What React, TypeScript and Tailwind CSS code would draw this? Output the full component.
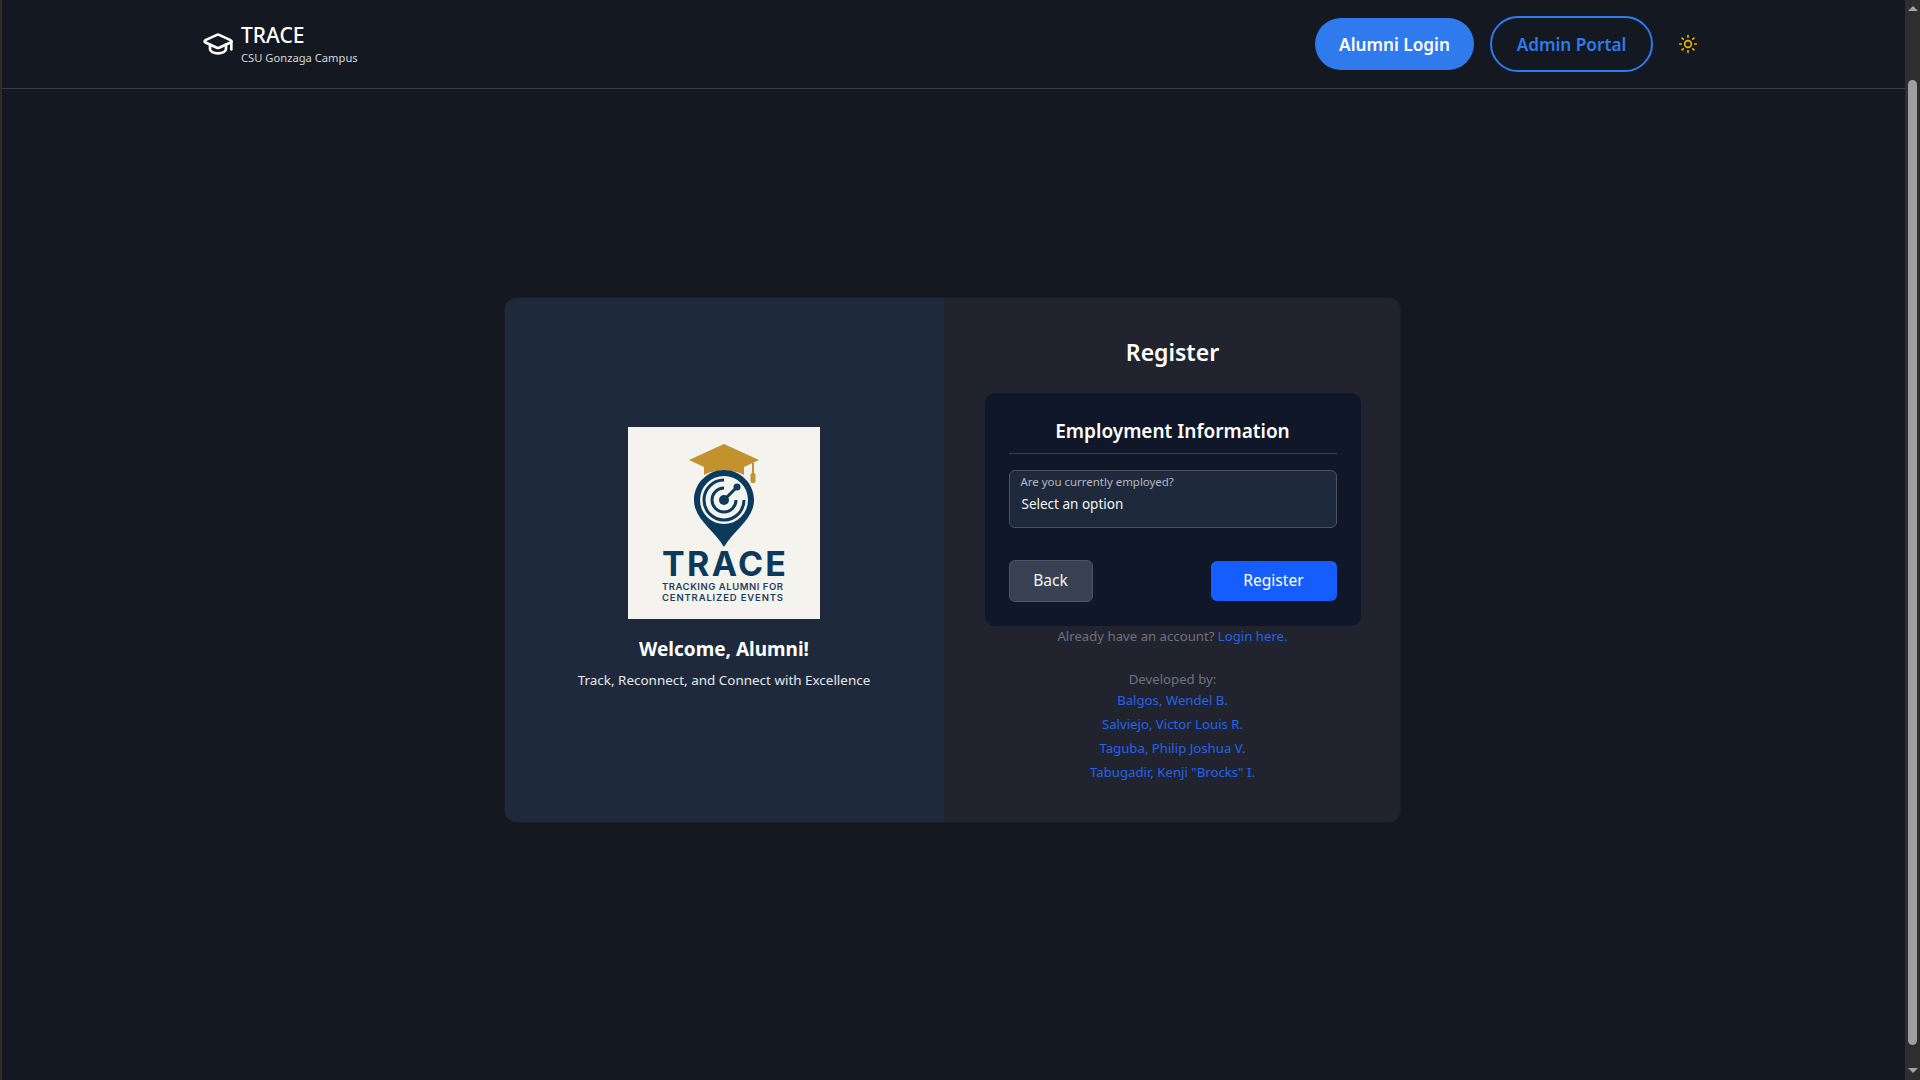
import React from "react";
import { Sun, GraduationCap } from "lucide-react";

function Logo() {
  return (
    <div className="w-[192px] h-[192px] bg-[#f5f3ee] shrink-0">
      <svg viewBox="0 0 192 192" width="192" height="192" className="block">
        <path d="M61 33 L96 17 L131 33 L116 40 L116 48 C106 42 86 42 76 48 L76 40 Z" fill="#c3922e" />
        <path d="M125 36 L125 48" stroke="#c3922e" strokeWidth="2" fill="none" />
        <rect x="122.500" y="46" width="5" height="10" rx="2" fill="#c3922e" />
        <path d="M96 120 C86 103 66 92 66 73 C66 56 80 43 96 43 C112 43 126 56 126 73 C126 92 106 103 96 120 Z" fill="#0b3a5c" />
        <circle cx="96" cy="73" r="24" fill="#f5f3ee" />
        <path d="M116 73 A20 20 0 1 1 96 53" fill="none" stroke="#0b3a5c" strokeWidth="3" />
        <path d="M108 73 A12 12 0 1 1 96 61" fill="none" stroke="#0b3a5c" strokeWidth="3" />
        <circle cx="96" cy="73" r="5" fill="#0b3a5c" />
        <path d="M96 73 L109 60" stroke="#0b3a5c" strokeWidth="3" />
        <circle cx="109" cy="60" r="3.500" fill="#0b3a5c" />
        <text x="34" y="149" textLength="124" lengthAdjust="spacing" fontFamily="Inter, sans-serif" fontWeight="700" fontSize="34" fill="#0b3a5c">TRACE</text>
        <text x="34" y="163" textLength="121" lengthAdjust="spacing" fontFamily="Inter, sans-serif" fontWeight="600" fontSize="9.500" fill="#1d4060">TRACKING ALUMNI FOR</text>
        <text x="34" y="174" textLength="121" lengthAdjust="spacing" fontFamily="Inter, sans-serif" fontWeight="600" fontSize="9.500" fill="#1d4060">CENTRALIZED EVENTS</text>
      </svg>
    </div>
  );
}

function Authors() {
  const names = ["Balgos, Wendel B.", "Salviejo, Victor Louis R.", "Taguba, Philip Joshua V.", 'Tabugadir, Kenji "Brocks" I.'];
  return (
    <div className="flex flex-col items-center">
      {names.map((n) => (
        <a key={n} className="text-[13.2px] leading-[24px] text-[#2563eb]">{n}</a>
      ))}
    </div>
  );
}

export default function App() {
  return (
    <div className="flex h-screen w-full overflow-hidden bg-[#141921] text-white font-['Noto_Sans',sans-serif]">
      <div className="w-[2px] shrink-0 bg-[#2b2b2b]" />
      <div className="flex-1 min-w-0 flex flex-col">
        <header className="h-[89px] shrink-0 border-b border-[#3a3e45] flex items-center justify-between pl-[200px] pr-[198px]">
          <div className="flex items-center gap-[7px]">
            <GraduationCap size={32} strokeWidth={2} className="text-white" />
            <div className="flex flex-col pt-[1px]">
              <span className="text-[21px] leading-[24px] font-medium">TRACE</span>
              <span className="text-[11.200px] leading-[16px] text-[#d4d6da] mt-[3px]">CSU Gonzaga Campus</span>
            </div>
          </div>
          <div className="flex items-center gap-[16px]">
            <button className="h-[52px] w-[159px] pt-[1px] rounded-full bg-[#2f7aed] text-[17.200px] font-semibold text-white">Alumni Login</button>
            <button className="h-[56px] w-[163px] pt-[1px] rounded-full border-2 border-[#2f7aed] text-[17.200px] font-semibold text-[#2f7aed]">Admin Portal</button>
            <div className="w-[38px] h-[40px] flex items-center justify-center pr-[1px]">
              <Sun size={20} className="text-[#eab308]" />
            </div>
          </div>
        </header>
        <main className="flex-1 flex items-start justify-center pt-[209px] pr-[3px]">
          <div className="w-[895px] h-[524px] rounded-[12px] overflow-hidden flex shadow-[0_0_1px_rgba(255,255,255,0.25)]">
            <section className="w-[439px] shrink-0 bg-[#1e2a3b] flex flex-col items-center justify-center pb-[3px]">
              <Logo />
              <h2 className="mt-[16px] text-[19px] leading-[28px] font-bold">Welcome, Alumni!</h2>
              <p className="mt-[7px] text-[13.440px] leading-[20px] text-[#e5e7eb]">Track, Reconnect, and Connect with Excellence</p>
            </section>
            <section className="flex-1 bg-[#21242e] flex flex-col items-center pl-[41px] pr-[39px] pt-[38px]">
              <h1 className="text-[23px] leading-[32px] font-semibold">Register</h1>
              <div className="mt-[25px] w-full h-[233px] rounded-[10px] bg-[#101729] px-[24px] pt-[24px]">
                <h3 className="text-center text-[19px] leading-[28px] font-semibold pb-[8px] border-b border-[#3a3f4b]">Employment Information</h3>
                <div className="mt-[16px] h-[58px] rounded-[6px] bg-[#1e2a3b] border border-[#4a5160] px-[11px] pt-[2px]">
                  <div className="text-[11.450px] leading-[18px] text-[#b4b8c0]">Are you currently employed?</div>
                  <div className="text-[13.500px] leading-[20px] mt-[3px] text-[#f3f4f6] pl-[1px]">Select an option</div>
                </div>
                <div className="mt-[32px] flex items-center justify-between">
                  <button className="w-[84px] h-[42px] rounded-[6px] bg-[#374151] border border-[#4b5563] text-[15.600px] text-[#f3f4f6]">Back</button>
                  <button className="w-[126px] h-[40px] rounded-[6px] bg-[#155dfc] text-[15.600px] text-white">Register</button>
                </div>
              </div>
              <p className="mt-[0px] text-[13.200px] leading-[20px] text-[#6b7280]">Already have an account? <a className="text-[#2563eb]">Login here.</a></p>
              <p className="mt-[24px] text-[13.200px] leading-[18px] text-[#6b7280]">Developed by:</p>
              <Authors />
            </section>
          </div>
        </main>
      </div>
      <div className="w-[15px] shrink-0 bg-[#2e2e2e] flex flex-col items-center">
        <div className="h-[16px] shrink-0 flex items-center justify-center"><div className="w-0 h-0 border-l-[5px] border-r-[5px] border-b-[5px] border-l-transparent border-r-transparent border-b-[#a3a3a3]" /></div>
        <div className="mt-[64px] w-[9px] h-[965px] rounded-full bg-[#9e9e9e] shrink-0" />
        <div className="mt-auto h-[20px] shrink-0 flex items-center justify-center"><div className="w-0 h-0 border-l-[5px] border-r-[5px] border-t-[5px] border-l-transparent border-r-transparent border-t-[#a3a3a3]" /></div>
      </div>
    </div>
  );
}
